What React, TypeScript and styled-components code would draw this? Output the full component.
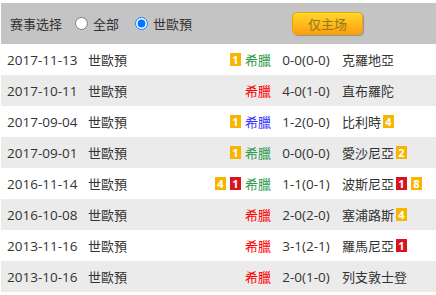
import React from "react";
import styled, { createGlobalStyle } from "styled-components";

const GlobalStyle = createGlobalStyle`
  html, body {
    margin: 0;
    padding: 0;
    background: #ffffff;
  }
  body {
    font-family: "Open Sans", "Noto Sans CJK SC", sans-serif;
    font-size: 13px;
    color: #333333;
  }
`;

const Wrapper = styled.div`
  width: 436px;
  padding: 3px 0 0 1px;
  box-sizing: border-box;
`;

const Toolbar = styled.div`
  height: 41px;
  background-color: #c4c4c4;
  display: flex;
  align-items: center;
  padding-left: 9px;
`;

const Label = styled.span`
  margin-right: 9px;
`;

const RadioLabel = styled.label`
  display: flex;
  align-items: center;
  margin-right: 12px;
  cursor: pointer;

  input {
    margin: 0 5px 0 4px;
    width: 13px;
    height: 13px;
  }
`;

const OnlyHomeButton = styled.button`
  margin-left: auto;
  margin-right: 73px;
  width: 71px;
  height: 23px;
  border: 1px solid #e8a602;
  border-radius: 5px;
  background: linear-gradient(#ffd72a, #ff9e10);
  box-shadow: 1px 1px 1px rgba(0, 0, 0, 0.25);
  color: #94781a;
  font-family: "Noto Sans CJK SC", sans-serif;
  font-size: 13px;
  padding: 0;
  cursor: pointer;
`;

const Row = styled.div<{ $alt: boolean }>`
  height: 31px;
  display: flex;
  align-items: center;
  padding-left: 6px;
  background-color: ${(p) => (p.$alt ? "#ebebeb" : "#ffffff")};
`;

const DateCell = styled.div`
  width: 81px;
  font-size: 13.5px;
`;

const League = styled.div`
  flex: 1;
`;

const Home = styled.div`
  display: flex;
  align-items: center;
  justify-content: flex-end;
  gap: 4px;
  width: 80px;
`;

const Team = styled.span<{ $color?: string }>`
  color: ${(p) => p.$color || "#333333"};
  font-family: "Noto Sans CJK SC", sans-serif;
`;

const Score = styled.div`
  width: 70px;
  text-align: center;
  font-size: 13.5px;
`;

const Away = styled.div`
  display: flex;
  align-items: center;
  gap: 4px;
  width: 94px;
  padding-left: 1px;
`;

const Badge = styled.span<{ $red?: boolean }>`
  display: inline-flex;
  align-items: center;
  justify-content: center;
  width: 11px;
  height: 13px;
  background-color: ${(p) => (p.$red ? "#d9141c" : "#f7b500")};
  color: #ffffff;
  font-size: 11px;
  font-weight: bold;
  line-height: 1;
`;

const AwayBadges = styled.span`
  display: flex;
  gap: 4px;
  margin-left: -2px;
`;

type Card = { n: number; red?: boolean };
type Match = {
  date: string;
  home: string;
  homeColor: string;
  homeCards: Card[];
  score: string;
  away: string;
  awayCards: Card[];
};

const GREEN = "#2f9a4e";
const RED = "#ff0000";
const BLUE = "#3333ff";

const matches: Match[] = [
  { date: "2017-11-13", home: "希臘", homeColor: GREEN, homeCards: [{ n: 1 }], score: "0-0(0-0)", away: "克羅地亞", awayCards: [] },
  { date: "2017-10-11", home: "希臘", homeColor: RED, homeCards: [], score: "4-0(1-0)", away: "直布羅陀", awayCards: [] },
  { date: "2017-09-04", home: "希臘", homeColor: BLUE, homeCards: [{ n: 1 }], score: "1-2(0-0)", away: "比利時", awayCards: [{ n: 4 }] },
  { date: "2017-09-01", home: "希臘", homeColor: GREEN, homeCards: [{ n: 1 }], score: "0-0(0-0)", away: "愛沙尼亞", awayCards: [{ n: 2 }] },
  { date: "2016-11-14", home: "希臘", homeColor: GREEN, homeCards: [{ n: 4 }, { n: 1, red: true }], score: "1-1(0-1)", away: "波斯尼亞", awayCards: [{ n: 1, red: true }, { n: 8 }] },
  { date: "2016-10-08", home: "希臘", homeColor: RED, homeCards: [], score: "2-0(2-0)", away: "塞浦路斯", awayCards: [{ n: 4 }] },
  { date: "2013-11-16", home: "希臘", homeColor: RED, homeCards: [], score: "3-1(2-1)", away: "羅馬尼亞", awayCards: [{ n: 1, red: true }] },
  { date: "2013-10-16", home: "希臘", homeColor: RED, homeCards: [], score: "2-0(1-0)", away: "列支敦士登", awayCards: [] },
];

export default function App() {
  return (
    <Wrapper>
      <GlobalStyle />
      <Toolbar>
        <Label>赛事选择</Label>
        <RadioLabel>
          <input type="radio" name="league" />
          全部
        </RadioLabel>
        <RadioLabel>
          <input type="radio" name="league" defaultChecked />
          世歐預
        </RadioLabel>
        <OnlyHomeButton>仅主场</OnlyHomeButton>
      </Toolbar>
      {matches.map((m, i) => (
        <Row key={m.date} $alt={i % 2 === 1}>
          <DateCell>{m.date}</DateCell>
          <League>世歐預</League>
          <Home>
            {m.homeCards.map((c, j) => (
              <Badge key={j} $red={c.red}>{c.n}</Badge>
            ))}
            <Team $color={m.homeColor}>{m.home}</Team>
          </Home>
          <Score>{m.score}</Score>
          <Away>
            <Team>{m.away}</Team>
            {m.awayCards.length > 0 && (
              <AwayBadges>
                {m.awayCards.map((c, j) => (
                  <Badge key={j} $red={c.red}>{c.n}</Badge>
                ))}
              </AwayBadges>
            )}
          </Away>
        </Row>
      ))}
    </Wrapper>
  );
}
